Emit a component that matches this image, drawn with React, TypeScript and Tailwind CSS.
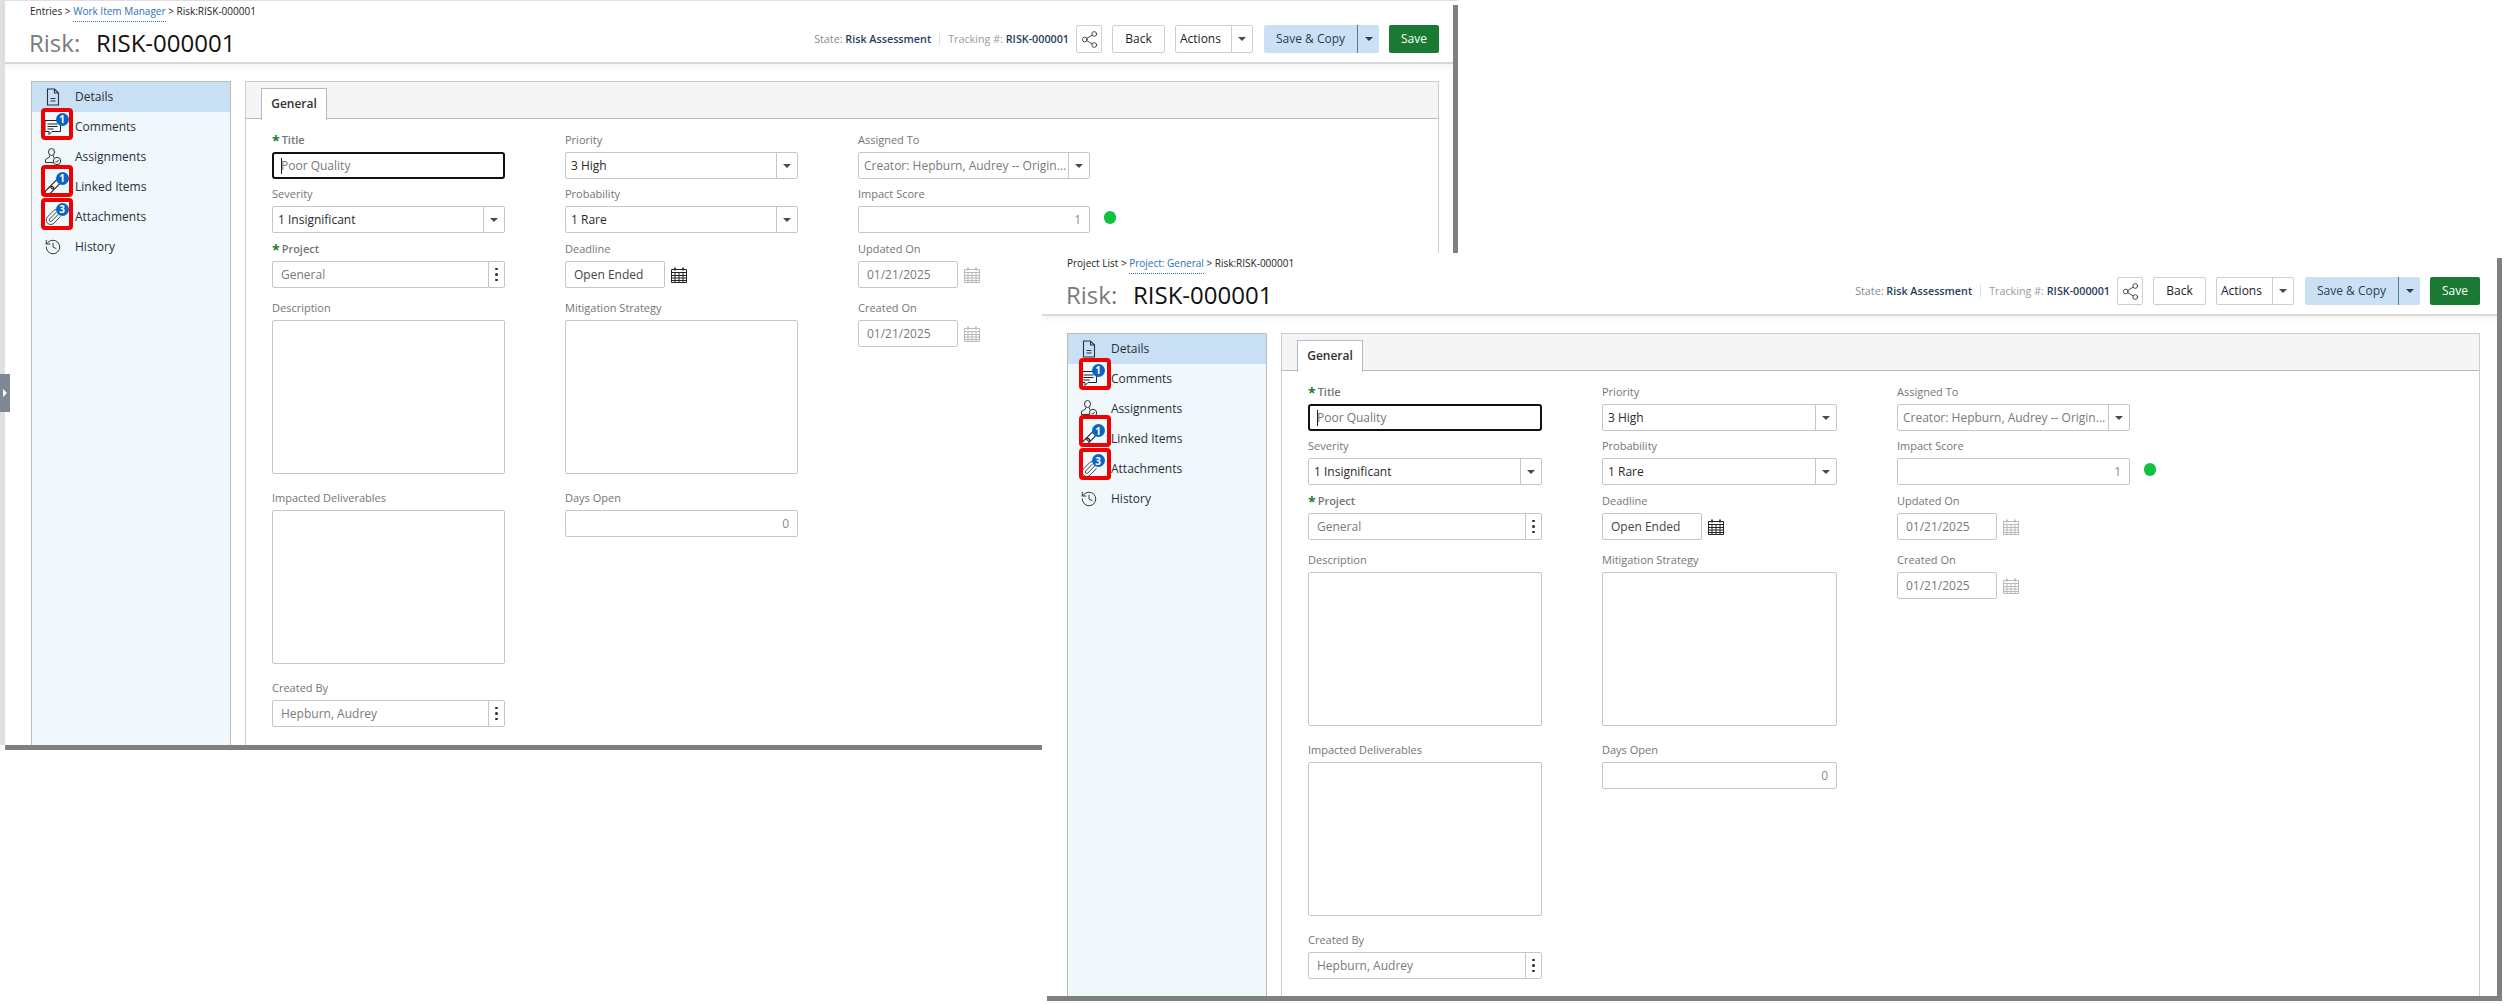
import type { ReactNode } from "react";
import { History, Paperclip, Share2 } from "lucide-react";

function DocIcon() {
  return (
    <svg width="18" height="18" viewBox="0 0 18 18" fill="none" stroke="#2b3340" strokeWidth="1.1">
      <path d="M3.5 1h7l4 4v12h-11z" />
      <path d="M10.5 1v4h4M6.5 10.5h5M6.5 13h5" />
    </svg>
  );
}

function CommentIcon() {
  return (
    <svg width="18" height="18" viewBox="0 0 18 18" fill="none" stroke="#222" strokeWidth="1">
      <path d="M1 2.500h15.500v11H8l-3 3v-3H1z" />
      <path d="M3.500 6h10M3.500 8.500h10M3.500 11h6" />
    </svg>
  );
}

function AssignIcon() {
  return (
    <svg width="18" height="18" viewBox="0 0 18 18" fill="none" stroke="#333" strokeWidth="1">
      <ellipse cx="7.500" cy="4" rx="3" ry="3.500" />
      <path d="M5.500 7.500v1.500L1.500 11.500v3h8" />
      <path d="M9.500 7.500v2" />
      <circle cx="13" cy="13" r="3.700" />
      <path d="M11.500 13l1.200 1.200 2-2.200" />
    </svg>
  );
}

function LinkIcon() {
  return (
    <svg width="18" height="18" viewBox="0 0 18 18" fill="none" stroke="#222" strokeWidth="1.100">
      <g transform="rotate(-45 9 9)">
        <rect x="-1" y="6.500" width="10" height="5" rx="2.500" />
        <rect x="7" y="6.500" width="12" height="5" rx="2.500" />
      </g>
    </svg>
  );
}

function CalendarIcon({ muted }: { muted?: boolean }) {
  const c = muted ? "#b9b9b9" : "#222";
  return (
    <svg width="16" height="16" viewBox="0 0 16 16" fill="none" stroke={c} strokeWidth="1">
      <path d="M.5 2.500h15v13H.5z" />
      <path d="M.5 5.500h15M.5 8.500h15M.5 11h15M.5 13.500h15M4 5.500v10M8 5.500v10M12 5.500v10" />
      <path d="M4 .5v3M12 .5v3" strokeWidth="1.600" />
    </svg>
  );
}

function Caret() {
  return <span className="h-0 w-0 border-x-[4px] border-t-[4px] border-x-transparent border-t-[#4a4a4a]" />;
}

function Badge({ n, className }: { n: number; className: string }) {
  return (
    <span className={`absolute flex h-[13px] w-[13px] items-center justify-center rounded-full bg-[#0a64c2] text-[10px] leading-none font-bold text-white ${className}`}>
      {n}
    </span>
  );
}

type Mark = { box: string; icon: string; badge: string; n: number };

const leftMarks: Record<string, Mark> = {
  Comments: { box: "left-[9px] top-[-4px]", icon: "left-[-1px] top-[6px]", badge: "left-[10.500px] top-[.5px]", n: 1 },
  "Linked Items": { box: "left-[9px] top-[-7px]", icon: "left-[-1px] top-[9px]", badge: "left-[10.500px] top-[2.500px]", n: 1 },
  Attachments: { box: "left-[9px] top-[-4px]", icon: "left-[-1px] top-[6px]", badge: "left-[10.500px] top-[.5px]", n: 3 },
};

const rightMarks: Record<string, Mark> = {
  Comments: { box: "left-[11px] top-[-6px]", icon: "left-[-3px] top-[7px]", badge: "left-[8.500px] top-[1.500px]", n: 1 },
  "Linked Items": { box: "left-[11px] top-[-9px]", icon: "left-[-3px] top-[11px]", badge: "left-[8.500px] top-[5px]", n: 1 },
  Attachments: { box: "left-[11px] top-[-6px]", icon: "left-[-3px] top-[8px]", badge: "left-[8.500px] top-[2px]", n: 3 },
};

const navItems: { label: string; icon: ReactNode }[] = [
  { label: "Details", icon: <DocIcon /> },
  { label: "Comments", icon: <CommentIcon /> },
  { label: "Assignments", icon: <AssignIcon /> },
  { label: "Linked Items", icon: <LinkIcon /> },
  { label: "Attachments", icon: <Paperclip size={18} strokeWidth={1.1} color="#222" /> },
  { label: "History", icon: <History size={18} strokeWidth={1.2} color="#222" /> },
];

function Sidebar({ marks }: { marks: Record<string, Mark> }) {
  return (
    <aside className="w-[200px] shrink-0 border-x-[1.500px] border-t-[1.500px] border-[#bcbcbc] bg-[#f0f8fb]">
      {navItems.map((item, i) => {
        const mark = marks[item.label];
        return (
          <div key={item.label} className={`relative flex h-[30px] items-center gap-[13px] pl-[12px] text-[12px] text-[#27303a] ${i === 0 ? "bg-[#c9dff3]" : ""}`}>
            <span className="flex h-[18px] w-[18px] items-center justify-center">{mark ? null : item.icon}</span>
            {item.label}
            {mark && (
              <div className={`absolute z-10 h-[32px] w-[32px] overflow-hidden rounded-[4px] border-[4px] border-[#f00000] bg-[#f0f8fb] ${mark.box}`}>
                <span className={`absolute flex h-[18px] w-[18px] items-center justify-center ${mark.icon}`}>{item.icon}</span>
                <Badge n={mark.n} className={mark.badge} />
              </div>
            )}
          </div>
        );
      })}
    </aside>
  );
}

function Field({ label, required, children }: { label: string; required?: boolean; children: ReactNode }) {
  return (
    <div>
      <div className="flex h-[22px] items-center pb-[1px] text-[11px] text-[#757575]">
        {required && <span className="mr-[2px] text-[14px] leading-none font-bold text-[#1a7a33]">*</span>}
        <span className={required ? "font-semibold" : ""}>{label}</span>
      </div>
      {children}
    </div>
  );
}

const boxClass = "flex h-[27px] items-center rounded-[2px] border-[1.500px] border-[#c6c6c6] bg-white text-[12px]";

function Select({ value, muted }: { value: string; muted?: boolean }) {
  return (
    <div className={boxClass}>
      <span className={`min-w-0 flex-1 overflow-hidden pl-[5px] whitespace-nowrap ${muted ? "text-[#7a7a7a]" : "text-[#2a2a2a]"}`}>{value}</span>
      <span className="flex h-full w-[21px] shrink-0 items-center justify-center border-l border-[#c6c6c6]">
        <Caret />
      </span>
    </div>
  );
}

function Lookup({ value }: { value: string }) {
  return (
    <div className={boxClass}>
      <span className="flex-1 pl-[8px] text-[#7a7a7a]">{value}</span>
      <span className="flex h-full w-[16px] flex-col items-center justify-center gap-[3px] border-l border-[#c6c6c6]">
        <i className="h-[2.500px] w-[2.500px] rounded-full bg-[#1c2c44]" />
        <i className="h-[2.500px] w-[2.500px] rounded-full bg-[#1c2c44]" />
        <i className="h-[2.500px] w-[2.500px] rounded-full bg-[#1c2c44]" />
      </span>
    </div>
  );
}

function DateBox({ value, muted }: { value: string; muted?: boolean }) {
  return (
    <div className="flex items-center gap-[6px]">
      <div className={`${boxClass} w-[100px] pl-[8px] ${muted ? "text-[#7a7a7a]" : "text-[#444]"}`}>{value}</div>
      <CalendarIcon muted={muted} />
    </div>
  );
}

function TextArea() {
  return <div className="h-[154px] rounded-[2px] border-[1.500px] border-[#c6c6c6] bg-white" />;
}

function NumberBox({ value }: { value: string }) {
  return <div className={`${boxClass} justify-end pr-[8px] text-[#8a8a8a]`}>{value}</div>;
}

function Form({ gridClass }: { gridClass: string }) {
  return (
    <div className={`grid grid-rows-[54px_55px_59px_190px_190px_49px] items-start pt-[11px] pl-[26px] ${gridClass}`}>
      <Field label="Title" required>
        <div className="flex h-[27px] items-center rounded-[3px] border-2 border-[#111] bg-white pl-[7px] text-[12px] text-[#777]">
          <span className="mr-[-1px] h-[16px] w-px bg-[#222]" />
          Poor Quality
        </div>
      </Field>
      <Field label="Priority"><Select value="3 High" /></Field>
      <Field label="Assigned To"><Select value="Creator: Hepburn, Audrey -- Origin..." muted /></Field>

      <Field label="Severity"><Select value="1 Insignificant" /></Field>
      <Field label="Probability"><Select value="1 Rare" /></Field>
      <Field label="Impact Score">
        <div className="flex items-center">
          <div className="w-full shrink-0"><NumberBox value="1" /></div>
          <span className="mb-[4px] ml-[14px] h-[13px] w-[12px] shrink-0 rounded-full bg-[#10c240]" />
        </div>
      </Field>

      <Field label="Project" required><Lookup value="General" /></Field>
      <Field label="Deadline"><DateBox value="Open Ended" /></Field>
      <Field label="Updated On"><DateBox value="01/21/2025" muted /></Field>

      <Field label="Description"><TextArea /></Field>
      <Field label="Mitigation Strategy"><TextArea /></Field>
      <Field label="Created On"><DateBox value="01/21/2025" muted /></Field>

      <Field label="Impacted Deliverables"><TextArea /></Field>
      <Field label="Days Open"><NumberBox value="0" /></Field>
      <div />

      <Field label="Created By"><Lookup value="Hepburn, Audrey" /></Field>
    </div>
  );
}

function Toolbar() {
  return (
    <div className="mt-[24px] flex items-center self-start text-[10.750px]">
      <span className="text-[#8a8a8a]">State: <b className="font-semibold text-[#1f3f5c]">Risk Assessment</b></span>
      <span className="mx-[8px] h-[12px] w-px bg-[#d5e2ea]" />
      <span className="text-[#9a9a9a]">Tracking #: <b className="font-semibold text-[#1f3f5c]">RISK-000001</b></span>
      <button className="ml-[7px] flex h-[28px] w-[26px] items-center justify-center rounded-[2px] border-[1.500px] border-[#cfcfcf] bg-white">
        <Share2 size={19} strokeWidth={1} color="#222" />
      </button>
      <button className="ml-[10px] h-[28px] w-[53px] rounded-[2px] border-[1.500px] border-[#cfcfcf] bg-white text-[12px] text-[#222]">Back</button>
      <div className="ml-[10px] flex h-[28px] w-[78px] items-center rounded-[2px] border-[1.500px] border-[#cfcfcf] bg-white text-[12px] text-[#222]">
        <span className="flex-1 pl-[4px]">Actions</span>
        <span className="flex h-full w-[21px] items-center justify-center border-l border-[#cfcfcf]"><Caret /></span>
      </div>
      <div className="ml-[11px] flex h-[28px] w-[115px] items-center rounded-[2px] bg-[#cbe0f5] text-[12px] text-[#1f3f5c]">
        <span className="flex-1 text-center">Save &amp; Copy</span>
        <span className="flex h-full w-[22px] items-center justify-center border-l border-[#4f7d99]">
          <span className="h-0 w-0 border-x-[4px] border-t-[4px] border-x-transparent border-t-[#1f3f5c]" />
        </span>
      </div>
      <button className="ml-[10px] h-[28px] w-[50px] rounded-[2px] bg-[#1a7a33] text-[12px] text-white">Save</button>
    </div>
  );
}

type WindowProps = {
  className: string;
  crumbs: [string, string];
  marks: Record<string, Mark>;
  gridClass: string;
  bodyClass: string;
  headerClass: string;
  barClass: string;
  bottomClass: string;
  withChrome?: boolean;
};

function RiskWindow({ className, crumbs, marks, gridClass, bodyClass, headerClass, barClass, bottomClass, withChrome }: WindowProps) {
  return (
    <section className={`absolute flex flex-col overflow-hidden bg-white ${className}`}>
      {withChrome && <div className="h-px shrink-0 bg-[#e0e0e0]" />}
      <div className="flex min-h-0 flex-1">
        {withChrome && <div className="mb-[5px] w-[5px] shrink-0 bg-[#e0e0e0]" />}
        <div className="flex min-w-0 flex-1 flex-col">
          <header className={`flex h-[63px] shrink-0 justify-between border-b-2 border-[#d8d8d8] shadow-[0_3px_6px_rgba(0,0,0,0.05)] ${headerClass}`}>
            <div>
              <div className="mt-[3px] flex h-[17px] items-start text-[10px] leading-[14px] whitespace-pre text-[#222]">
                {crumbs[0]}
                <span className="border-b border-dotted border-[#2f6db5] pb-[3px] text-[#2a70c0]">{crumbs[1]}</span>
                {" > Risk:RISK-000001"}
              </div>
              <div className="mt-[5px] ml-[-1px] flex text-[24px] leading-[34px]">
                <span className="w-[67px] text-[#7b7b7b]">Risk:</span>
                <span className="text-[#111]">RISK-000001</span>
              </div>
            </div>
            <Toolbar />
          </header>
          <div className={`mt-[17px] flex min-h-0 flex-1 gap-[14px] ${bodyClass}`}>
            <Sidebar marks={marks} />
            <div className="min-w-0 flex-1 border-x-[1.500px] border-t-[1.500px] border-[#cdcdcd]">
              <div className="flex h-[37px] items-end border-b-[1.500px] border-[#aebccf] bg-[#f5f5f5] pl-[15px]">
                <div className="mb-[-1.500px] flex h-[32px] w-[66px] items-center justify-center border-x-[1.500px] border-t-[1.500px] border-[#aebccf] bg-white text-[12px] font-semibold text-[#333]">
                  General
                </div>
              </div>
              <Form gridClass={gridClass} />
            </div>
          </div>
          <div className={`h-[5px] shrink-0 bg-[#808080] ${bottomClass}`} />
        </div>
        <div className={`w-[5px] shrink-0 bg-[#808080] ${barClass}`} />
      </div>
    </section>
  );
}

export default function App() {
  return (
    <div className="relative h-[1006px] w-[2507px] overflow-hidden bg-white font-['Open_Sans',sans-serif]">
      <RiskWindow
        className="top-0 left-0 h-[750px] w-[1458px]"
        crumbs={["Entries > ", "Work Item Manager"]}
        marks={leftMarks}
        gridClass="grid-cols-[233px_233px_232px] gap-x-[60px]"
        bodyClass="pr-[14px] pl-[26px]"
        headerClass="pr-[14px] pl-[25px]"
        barClass="mt-[4px]"
        bottomClass=""
        withChrome
      />
      <div className="absolute top-[374px] left-0 flex h-[38px] w-[10px] items-center bg-[#7d8894] pl-[3px]">
        <span className="h-0 w-0 border-y-[4px] border-l-[4px] border-y-transparent border-l-white" />
      </div>
      <RiskWindow
        className="top-[253px] left-[1042px] h-[748px] w-[1460px]"
        crumbs={["Project List > ", "Project: General"]}
        marks={rightMarks}
        gridClass="grid-cols-[234px_235px_233px] gap-x-[60px]"
        bodyClass="pr-[17px] pl-[25px]"
        headerClass="pr-[17px] pl-[25px]"
        barClass="mt-[5px]"
        bottomClass="ml-[5px]"
      />
    </div>
  );
}
